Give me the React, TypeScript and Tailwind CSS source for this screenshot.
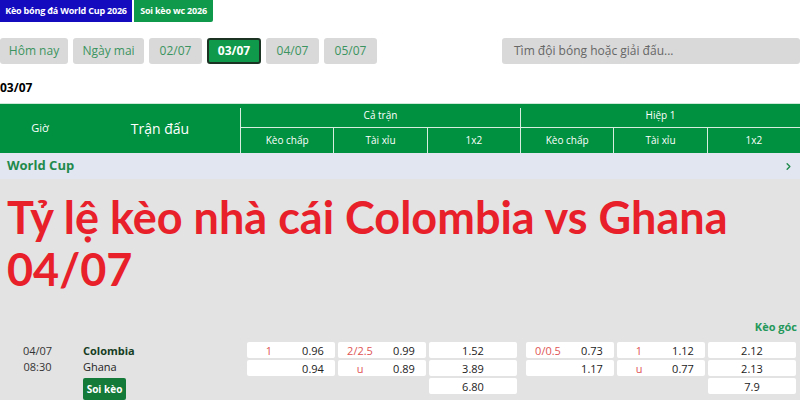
import { ChevronRight } from 'lucide-react'

const days = [
  { d: 'Hôm nay', w: 'w-[68px]' },
  { d: 'Ngày mai', w: 'w-[71px]' },
  { d: '02/07', w: 'w-[53px]' },
  { d: '03/07', w: 'w-[54px]' },
  { d: '04/07', w: 'w-[53px]' },
  { d: '05/07', w: 'w-[53px]' },
]

type Cell = { label?: string; value?: string }

// one column of odds: up to three stacked cells
const odds: Cell[][] = [
  [{ label: '1', value: '0.96' }, { value: '0.94' }],
  [{ label: '2/2.5', value: '0.99' }, { label: 'u', value: '0.89' }],
  [{ value: '1.52' }, { value: '3.89' }, { value: '6.80' }],
  [{ label: '0/0.5', value: '0.73' }, { value: '1.17' }],
  [{ label: '1', value: '1.12' }, { label: 'u', value: '0.77' }],
  [{ value: '2.12' }, { value: '2.13' }, { value: '7.9' }],
]

function OddsColumn({ cells }: { cells: Cell[] }) {
  const split = cells.some(x => x.label)
  return (
    <div className="w-[88px] flex flex-col gap-[2px]">
      {cells.map((c, i) => (
        <div key={i} className="h-[16px] bg-white rounded-[2px] flex items-center text-[11px] leading-none">
          {!split ? (
            <span className="w-full text-center text-[#222]">{c.value}</span>
          ) : (
            <>
              <span className="w-1/2 text-center text-[#e05555]">{c.label}</span>
              <span className="w-1/2 text-center text-[#222]">{c.value}</span>
            </>
          )}
        </div>
      ))}
    </div>
  )
}

export default function App() {
  return (
    <div className="w-[800px] h-[400px] overflow-hidden bg-[#e3e3e3] font-['Open_Sans',sans-serif]">
      <div className="bg-white">
        {/* top tabs */}
        <div className="flex gap-[2px] h-[22px]">
          <div className="w-[132px] bg-[#140bbf] text-white text-[9px] font-bold flex items-center justify-center tracking-[-0.2px]">Kèo bóng đá World Cup 2026</div>
          <div className="w-[79px] bg-[#0e9a4a] text-white text-[9px] font-bold flex items-center justify-center rounded-br-[2px] tracking-[-0.2px]">Soi kèo wc 2026</div>
        </div>

        {/* date picker + search */}
        <div className="flex items-center mt-[16px] h-[26px]">
          <div className="flex gap-[5px]">
            {days.map(({ d, w }) => (
              <div
                key={d}
                className={
                  d === '03/07'
                    ? `${w} h-[26px] rounded-[3px] bg-[#0e9a4a] border-2 border-[#1c3324] text-white font-bold text-[12px] flex items-center justify-center`
                    : `${w} h-[26px] rounded-[3px] bg-[#d9d9d9] text-[#3b9460] text-[12px] flex items-center justify-center`
                }
              >
                {d}
              </div>
            ))}
          </div>
          <div className="ml-auto w-[298px] h-[26px] bg-[#d9d9d9] rounded-[3px] flex items-center px-[12px] text-[12px] text-[#666]">
            Tìm đội bóng hoặc giải đấu...
          </div>
        </div>

        <div className="text-[12px] font-bold text-black mt-[15px] leading-none h-[24px] pt-[3px]">03/07</div>

        {/* table header */}
        <div className="h-[50px] bg-[#009140] border-t border-[#cfe9d8] flex text-white">
          <div className="w-[80px] flex items-center justify-center text-[11px]">Giờ</div>
          <div className="w-[160px] flex items-center justify-center text-[14px]">Trận đấu</div>
          {['Cả trận', 'Hiệp 1'].map(g => (
            <div key={g} className="w-[280px] flex flex-col">
              <div className="flex-1 flex border-b border-[#d7eddf]">
                <div className="w-px bg-[#d7eddf] mt-[4px]"></div>
                <div className="flex-1 flex items-center justify-center text-[10px]">{g}</div>
              </div>
              <div className="h-[25px] flex text-[10px]">
                {['Kèo chấp', 'Tài xỉu', '1x2'].map(s => (
                  <div key={s} className="flex-1 flex items-center justify-center border-l border-[#d7eddf]">{s}</div>
                ))}
              </div>
            </div>
          ))}
        </div>
      </div>

      {/* league row */}
      <div className="h-[26px] bg-[#e1e6f0] flex items-center justify-between pl-[7px] pr-[6px]">
        <span className="text-[13px] font-bold text-[#1f8a4c]">World Cup</span>
        <ChevronRight className="w-[11px] h-[11px] text-[#1f8a4c]" strokeWidth={3} />
      </div>

      <h1 className="font-['Lato',sans-serif] font-bold text-[#e8202a] text-[45px] leading-[52px] px-[7px] pt-[12px]">
        Tỷ lệ kèo nhà cái Colombia vs Ghana 04/07
      </h1>

      <div className="flex justify-end pr-[3px] mt-[24px] h-[20px]">
        <span className="text-[11px] font-bold text-[#23985a]">Kèo góc</span>
      </div>

      {/* match row */}
      <div className="flex mt-[3px]">
        <div className="w-[75px] flex flex-col items-center text-[11px] text-[#333] leading-[16px] pt-[1px]">
          <span>04/07</span>
          <span>08:30</span>
        </div>
        <div className="w-[172px] flex flex-col text-[11px] leading-[16px] pl-[8px] pt-[1px]">
          <span className="font-bold text-[#163d1f]">Colombia</span>
          <span className="text-[#222]">Ghana</span>
          <span className="mt-[3px] w-[43px] h-[22px] bg-[#147a3a] rounded-[2px] text-white text-[10px] font-bold flex items-center justify-center">Soi kèo</span>
        </div>
        <div className="flex gap-[9px]">
          <div className="flex gap-[3px]">
            {odds.slice(0, 3).map((c, i) => <OddsColumn key={i} cells={c} />)}
          </div>
          <div className="flex gap-[3px]">
            {odds.slice(3).map((c, i) => <OddsColumn key={i} cells={c} />)}
          </div>
        </div>
      </div>
    </div>
  )
}
